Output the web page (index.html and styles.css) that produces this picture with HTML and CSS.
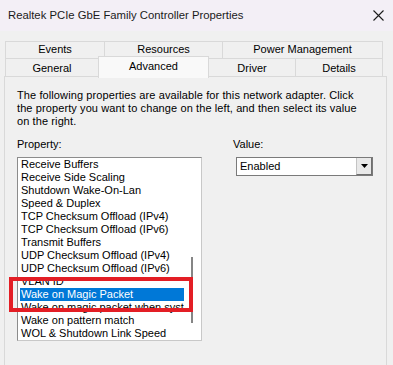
FILE: index.html
```html
<!DOCTYPE html>
<html>
<head>
<meta charset="utf-8">
<link rel="stylesheet" href="styles.css">
</head>
<body>
<div class="window">
  <div class="titlebar">
    <span class="title">Realtek PCIe GbE Family Controller Properties</span>
    <svg class="close" width="11" height="11" viewBox="0 0 11 11"><path d="M0.5 0.5L10.5 10.5M10.5 0.5L0.5 10.5" stroke="#1b1b1b" stroke-width="1.1" fill="none"/></svg>
  </div>
  <div class="content">
    <div class="tabs">
      <div class="tabrow">
        <div class="tab t-events">Events</div>
        <div class="tab t-resources">Resources</div>
        <div class="tab t-power last">Power Management</div>
      </div>
      <div class="tabrow front">
        <div class="tab t-general">General</div>
        <div class="tab t-advanced selected">Advanced</div>
        <div class="tab t-driver">Driver</div>
        <div class="tab t-details last">Details</div>
      </div>
    </div>
    <div class="panel">
      <p class="intro">The following properties are available for this network adapter. Click<br>the property you want to change on the left, and then select its value<br>on the right.</p>
      <div class="fields">
        <div class="col-prop">
          <div class="label">Property:</div>
          <div class="listbox">
            <ul class="items">
              <li>Receive Buffers</li>
              <li>Receive Side Scaling</li>
              <li>Shutdown Wake-On-Lan</li>
              <li>Speed &amp; Duplex</li>
              <li>TCP Checksum Offload (IPv4)</li>
              <li>TCP Checksum Offload (IPv6)</li>
              <li>Transmit Buffers</li>
              <li>UDP Checksum Offload (IPv4)</li>
              <li>UDP Checksum Offload (IPv6)</li>
              <li>VLAN ID</li>
              <li class="sel">Wake on Magic Packet</li>
              <li>Wake on magic packet when system is in the S0ix power state</li>
              <li>Wake on pattern match</li>
              <li>WOL &amp; Shutdown Link Speed</li>
            </ul>
            <div class="track"><div class="thumb"></div></div>
          </div>
        </div>
        <div class="col-value">
          <div class="label">Value:</div>
          <div class="combo">
            <span class="combo-text">Enabled</span>
            <span class="combo-btn"><svg width="7" height="4" viewBox="0 0 7 4"><path d="M0 0H7L3.5 4Z" fill="#000"/></svg></span>
          </div>
        </div>
      </div>
    </div>
  </div>
  <div class="redbox"></div>
</div>
</body>
</html>
```
FILE: styles.css
```css
* { box-sizing: border-box; }
html, body { margin: 0; padding: 0; }
body {
  width: 393px;
  height: 365px;
  overflow: hidden;
  background: #f0f0f0;
  font-family: "Liberation Sans", Arial, sans-serif;
  font-size: 11px;
  color: #000;
}
.window {
  position: relative;
  width: 393px;
  height: 365px;
  background: #f0f0f0;
}
.titlebar {
  height: 31px;
  background: #f3eff6;
  display: flex;
  align-items: center;
  justify-content: space-between;
  padding: 0 9px 0 8px;
}
.title {
  font-size: 11.3px;
  color: #1a1a1a;
  margin-top: -1px;
}
.close { margin-top: -1px; }
.content {
  padding: 10px 0 0 4px;
}
.tabs {
  margin-left: 1px;
  width: 378px;
}
.tabrow {
  display: flex;
  height: 17px;
}
.tabrow.front { height: 18px; }
.tab {
  border-top: 1px solid #d9d9d9;
  border-left: 1px solid #d9d9d9;
  background: #f0f0f0;
  text-align: center;
  line-height: 15px;
  white-space: nowrap;
}
.tab.last { border-right: 1px solid #d9d9d9; }
.tabrow.front .tab { line-height: 18px; }
.t-events { width: 99px; }
.t-resources { width: 118px; }
.t-power { width: 161px; }
.t-general { width: 93px; }
.t-advanced { width: 111px; }
.t-driver { width: 86px; }
.t-details { width: 88px; }
.tab.selected {
  position: relative;
  z-index: 2;
  margin-top: -2px;
  height: 22px;
  background: #f9f9f9;
  border-right: 1px solid #d9d9d9;
  line-height: 17px;
}
.tab.selected + .tab { border-left: none; }
.panel {
  width: 383px;
  height: 300px;
  border: 1px solid #d9d9d9;
  background: #f0f0f0;
  padding: 12px 0 0 12px;
}
.intro {
  margin: 0;
  line-height: 13px;
  white-space: nowrap;
  letter-spacing: 0.1px;
}
.fields {
  display: flex;
  margin-top: 10px;
}
.label {
  line-height: 13px;
  height: 13px;
}
.col-prop { width: 185px; }
.col-value { margin-left: 31px; }
.listbox {
  position: relative;
  margin-top: 6px;
  width: 185px;
  height: 184px;
  background: #fff;
  border: 1px solid #c8c8c8;
  border-top-color: #8c8c8c;
  border-left-color: #8c8c8c;
  display: flex;
}
.items {
  list-style: none;
  margin: 0;
  padding: 0 0 0 2px;
  flex: 1;
  min-width: 0;
  overflow: hidden;
}
.items li {
  height: 13px;
  line-height: 13px;
  padding-left: 1px;
  white-space: nowrap;
  overflow: hidden;
}
.items li.sel {
  background: #0078d7;
  color: #fff;
}
.track {
  position: relative;
  width: 17px;
}
.thumb {
  position: absolute;
  left: 7px;
  top: 99px;
  width: 2px;
  height: 66px;
  background: #858585;
}
.combo {
  margin: 6px 0 0 3px;
  width: 137px;
  height: 19px;
  background: #fff;
  border: 1px solid #7a7a7a;
  display: flex;
  align-items: stretch;
}
.combo-text {
  flex: 1;
  padding-left: 3px;
  line-height: 17px;
}
.combo-btn {
  width: 16px;
  background: #e9e9e9;
  border-left: 1px solid #c4c4c4;
  border-right: 1px solid #6f6f6f;
  border-bottom: 1px solid #6f6f6f;
  display: flex;
  align-items: center;
  justify-content: center;
}
.redbox {
  position: absolute;
  left: 9px;
  top: 277px;
  width: 184px;
  height: 35px;
  border: 4px solid #e31e25;
  z-index: 5;
}
```
